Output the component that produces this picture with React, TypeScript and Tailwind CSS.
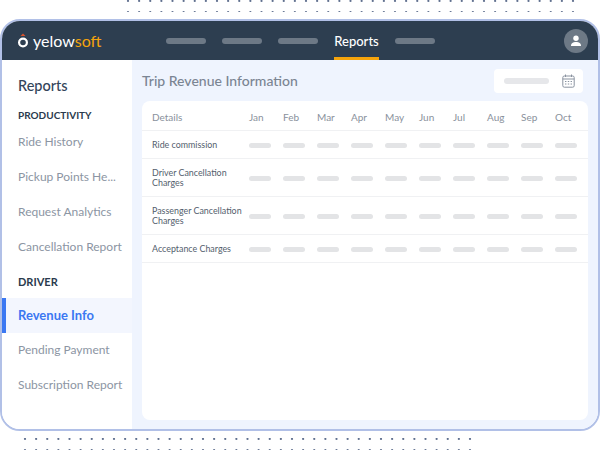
const font = { fontFamily: '"Lato", "Noto Sans", sans-serif' }

const months = ['Jan', 'Feb', 'Mar', 'Apr', 'May', 'Jun', 'Jul', 'Aug', 'Sep', 'Oct']

const rows = [
  { label: 'Ride commission', height: 'h-[28px]' },
  { label: 'Driver Cancellation Charges', height: 'h-[38px]' },
  { label: 'Passenger Cancellation Charges', height: 'h-[38px]' },
  { label: 'Acceptance Charges', height: 'h-[28px]' },
]

const Dots = ({ className }: { className: string }) => (
  <svg width="460" height="12" viewBox="0 0 460 12" className={className}>
    {[1, 12].map((y) =>
      Array.from({ length: 41 }).map((_, i) => (
        <circle key={`${y}-${i}`} cx={2 + i * 11.125} cy={y} r="1.1" fill="#5f6f8e" />
      ))
    )}
  </svg>
)

const Pill = () => <div className="h-[6px] w-[40px] rounded-full bg-[#6d7986]" />

const NavText = ({ children }: { children: string }) => (
  <div className="flex h-[35px] items-center pb-[2px] pl-[16px] text-[12px] text-[#8c95a3]">{children}</div>
)

export default function App() {
  return (
    <div style={font} className="h-[452px] w-[600px] overflow-hidden bg-white">
      <div className="h-[19px] pl-[126px]">
        <Dots className="block" />
      </div>

      <div className="flex h-[412px] flex-col overflow-hidden rounded-[20px] border-2 border-[#b1c0e7] bg-white">
        <header className="flex h-[39px] shrink-0 items-center bg-[#2d3e50] pl-[15px] pr-[10px]">
          <div className="flex w-[149px] items-center">
            <svg width="12" height="16" viewBox="0 0 12 16" className="mr-[4px]">
              <path d="M6 0.5 L8.5 3 H3.5 Z" fill="#d9532c" />
              <circle cx="6" cy="9.5" r="3.9" fill="none" stroke="#ffffff" strokeWidth="2.2" />
            </svg>
            <span className="text-[16px] leading-none text-white">
              yelow<span className="text-[#f5a40c]">soft</span>
            </span>
          </div>
          <div className="flex flex-1 items-center gap-[16px]">
            <Pill />
            <Pill />
            <Pill />
            <div className="relative flex h-[39px] w-[45px] items-center justify-center pt-[3px] text-[13px] font-medium text-white">
              Reports
              <div className="absolute bottom-0 left-0 h-[3px] w-[45px] bg-[#f5a40c]" />
            </div>
            <Pill />
          </div>
          <div className="flex h-[24px] w-[24px] items-center justify-center rounded-full bg-[#6d7986]">
            <svg width="12" height="12" viewBox="0 0 12 12" fill="#ffffff">
              <circle cx="6" cy="3.2" r="2.7" />
              <path d="M1 11 C1 8 3 7 6 7 C9 7 11 8 11 11 Z" />
            </svg>
          </div>
        </header>

        <div className="flex min-h-0 flex-1">
          <aside className="w-[130px] shrink-0 bg-white">
            <div className="flex h-[45px] items-end pb-[12px] pl-[16px] text-[14.5px] font-medium leading-none text-[#33445a]">
              Reports
            </div>
            <div className="flex h-[20px] items-center pl-[16px] text-[10px] font-bold text-[#2a3a4d]">
              PRODUCTIVITY
            </div>
            <NavText>Ride History</NavText>
            <NavText>Pickup Points He...</NavText>
            <NavText>Request Analytics</NavText>
            <NavText>Cancellation Report</NavText>
            <div className="flex h-[33px] items-center pt-[2px] pl-[16px] text-[11px] font-bold text-[#2a3a4d]">
              DRIVER
            </div>
            <div className="flex h-[35px] items-center border-l-4 border-[#3b78f2] bg-[#f3f6fe] pl-[12px] text-[13px] font-bold text-[#3b78f2]">
              Revenue Info
            </div>
            <NavText>Pending Payment</NavText>
            <NavText>Subscription Report</NavText>
          </aside>

          <main className="flex min-w-0 flex-1 flex-col bg-[#eff4fe] pb-[9px] pl-[10px] pr-[10px]">
            <div className="flex h-[41px] shrink-0 items-center justify-between">
              <h1 className="text-[14px] font-medium text-[#7b8593]">Trip Revenue Information</h1>
              <div className="mr-[5px] flex h-[24px] w-[89px] items-center justify-between rounded-[4px] bg-white pl-[10px] pr-[8px]">
                <div className="h-[6px] w-[45px] rounded-full bg-[#e6e7ea]" />
                <svg width="13" height="14" viewBox="0 0 13 14" fill="none" stroke="#8a93a0" strokeWidth="1">
                  <rect x="0.8" y="2" width="11.4" height="11.2" rx="1.5" />
                  <path d="M0.8 5H12.2M3.5 0.5V3M9.5 0.5V3" />
                  <path d="M3 7.5H4.4M5.8 7.5H7.2M8.6 7.5H10M3 10H4.4M5.8 10H7.2M8.6 10H10" strokeWidth="1.1" />
                </svg>
              </div>
            </div>

            <div className="min-h-0 flex-1 rounded-[8px] bg-white">
              <div className="grid h-[30px] grid-cols-[97px_repeat(10,34px)] items-center border-b border-[#f0f1f3] pl-[10px] pt-[3px] text-[10px] text-[#8a919c]">
                <div>Details</div>
                {months.map((m) => (
                  <div key={m}>{m}</div>
                ))}
              </div>
              {rows.map((r) => (
                <div
                  key={r.label}
                  className={`grid ${r.height} grid-cols-[97px_repeat(10,34px)] items-center border-b border-[#f0f1f3] pl-[10px] pt-[1px]`}
                >
                  <div className="pr-[2px] text-[8.9px] leading-[10px] text-[#535e6d]">{r.label}</div>
                  {months.map((m) => (
                    <div key={m} className="h-[5px] w-[22px] rounded-full bg-[#e3e4e6]" />
                  ))}
                </div>
              ))}
            </div>
          </main>
        </div>
      </div>

      <div className="pl-[23px] pt-[7px]">
        <Dots className="block" />
      </div>
    </div>
  )
}
